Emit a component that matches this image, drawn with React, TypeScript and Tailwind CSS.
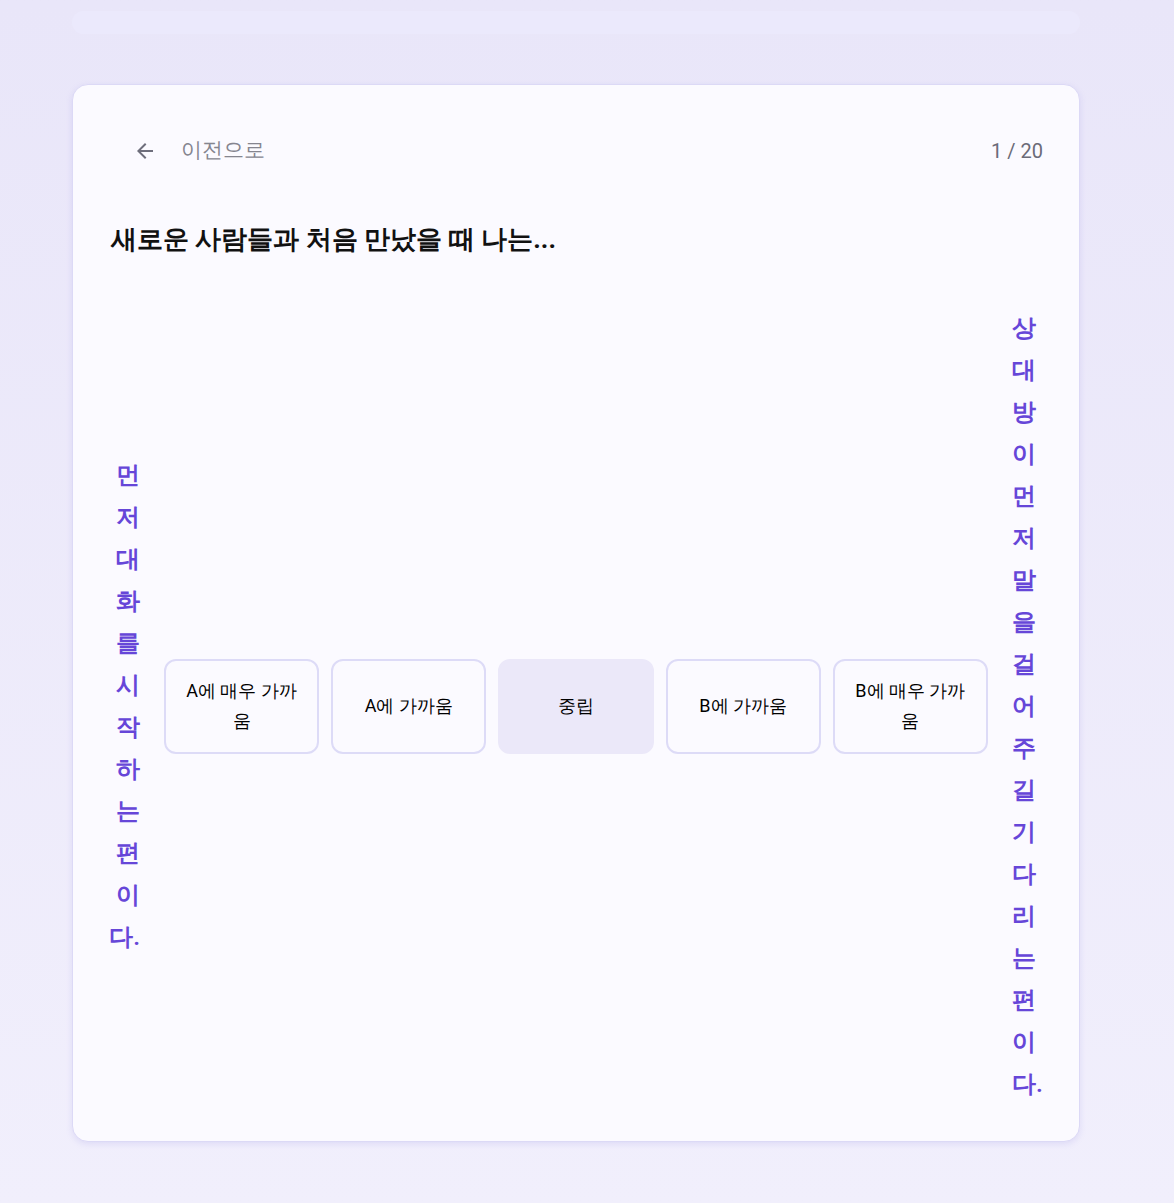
import { MdArrowBack } from 'react-icons/md'

const options = ['A에 매우 가까움', 'A에 가까움', '중립', 'B에 가까움', 'B에 매우 가까움']

function App() {
  const selected = 2
  return (
    <div
      className="min-h-screen w-full bg-gradient-to-b from-[#e9e6f9] to-[#f1effc] pt-[11px] pb-[62px]"
      style={{ fontFamily: 'Roboto, sans-serif' }}
    >
      <div className="ml-[72px] w-[1008px] flex flex-col">
        {/* progress track */}
        <div className="h-[23px] rounded-xl bg-[#ebe9fc]" />

        <div className="mt-[50px] rounded-2xl border border-[#dcd9f6] bg-[#fbfaff] shadow-[0_2px_6px_rgba(140,130,220,0.18)] p-9 flex flex-col">
          <div className="h-[60px] flex items-center justify-between">
            <button className="flex items-center gap-6 px-6 text-[21px] text-[#85858f]">
              <MdArrowBack size={24} className="text-[#6e6e7c]" />
              <span>이전으로</span>
            </button>
            <span className="text-[20px] text-[#6b6b78]">1 / 20</span>
          </div>

          <h1 className="mt-[42px] pl-[2px] text-[26px] leading-8 font-bold text-[#111]">
            새로운 사람들과 처음 만났을 때 나는...
          </h1>

          <div className="mt-[52px] flex items-center gap-6">
            <div className="w-[31px] text-right text-[24px] leading-[42px] text-[#6646d8] font-semibold break-all">
              먼저 대화를 시작하는 편이다.
            </div>
            <div className="flex-1 flex gap-3">
              {options.map((o, i) => (
                <button
                  key={o}
                  className={
                    i === selected
                      ? 'flex-1 h-[95px] rounded-xl border-2 border-[#ebe8f9] bg-[#ebe8f9] px-4 text-[18px] leading-[30px] text-black'
                      : 'flex-1 h-[95px] rounded-xl border-2 border-[#dddbf7] bg-[#fbfaff] px-4 text-[18px] leading-[30px] text-black'
                  }
                >
                  {o}
                </button>
              ))}
            </div>
            <div className="w-[31px] text-left text-[24px] leading-[42px] text-[#6646d8] font-semibold break-all">
              상대방이 먼저 말을 걸어주길 기다리는 편이다.
            </div>
          </div>
        </div>
      </div>
    </div>
  )
}

export default App
